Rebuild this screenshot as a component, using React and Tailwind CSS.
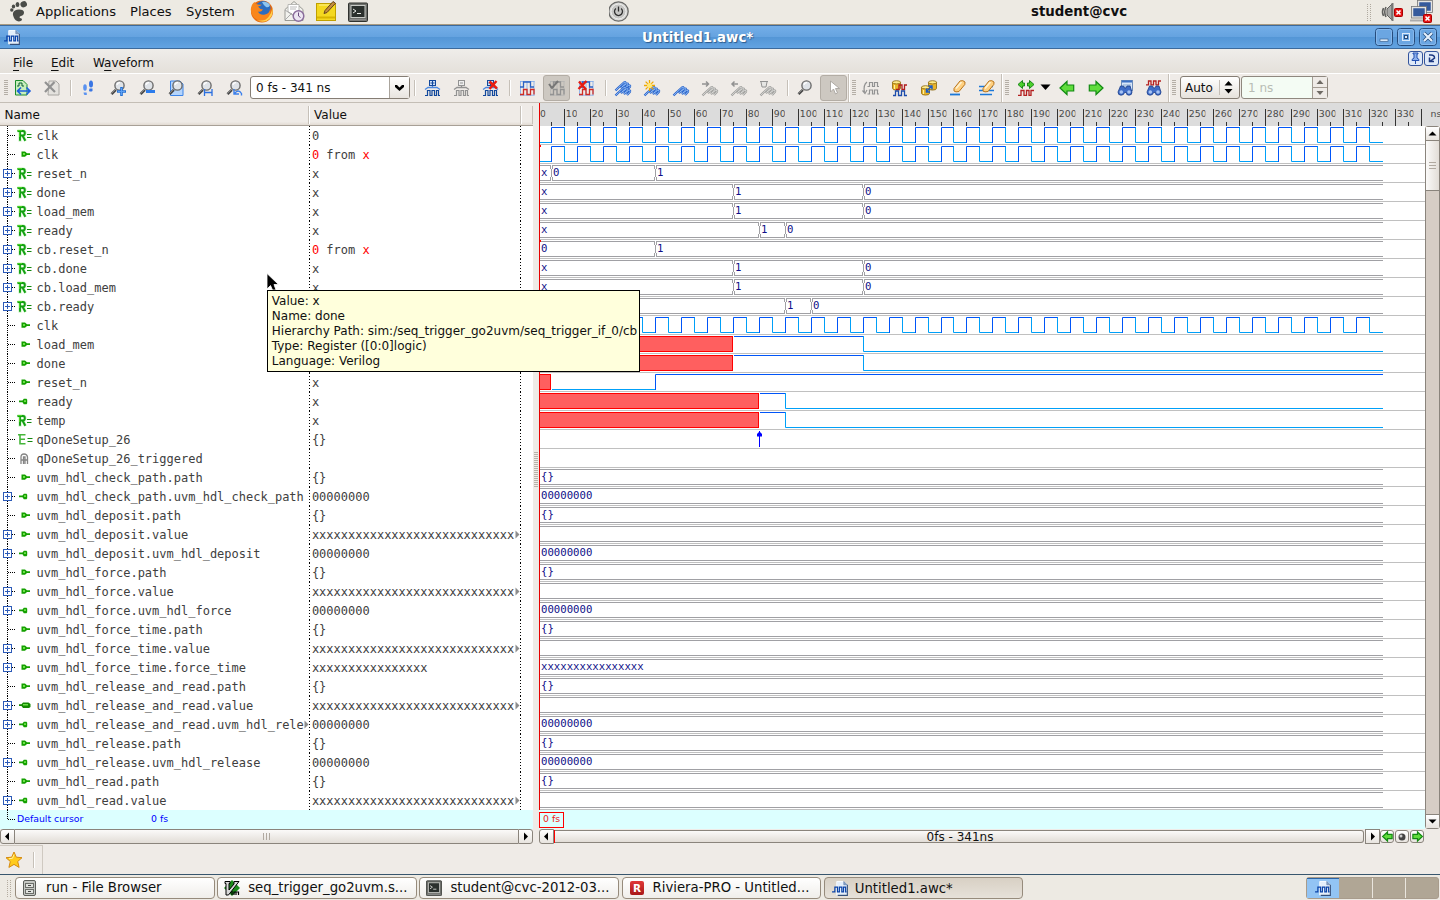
import React from "react";

const X0 = 538.5 - 539;
const SCALE = 2.5968;
const tx = (t) => Math.floor(X0 + t * SCALE);
const END = 844;

const HIGH = "#0055f8";
const LOW = "#00a0f8";
const BUS = "#a0a0a4";

const XS = "x".repeat(28);
const ROWS = [
  { n: "clk", i: "R", v: "0", w: { k: "clk" } },
  { n: "clk", i: "in", v: "0>x", w: { k: "clk" }, mark: true },
  { n: "reset_n", i: "R", e: 1, v: "x", w: { k: "bus", d: [[0, "x"], [5, "0"], [45, "1"]] } },
  { n: "done", i: "R", e: 1, v: "x", w: { k: "bus", d: [[0, "x"], [75, "1"], [125, "0"]] } },
  { n: "load_mem", i: "R", e: 1, v: "x", w: { k: "bus", d: [[0, "x"], [75, "1"], [125, "0"]] } },
  { n: "ready", i: "R", e: 1, v: "x", w: { k: "bus", d: [[0, "x"], [85, "1"], [95, "0"]] } },
  { n: "cb.reset_n", i: "R", e: 1, v: "0>x", w: { k: "bus", d: [[0, "0"], [45, "1"]] }, mark: true },
  { n: "cb.done", i: "R", e: 1, v: "x", w: { k: "bus", d: [[0, "x"], [75, "1"], [125, "0"]] } },
  { n: "cb.load_mem", i: "R", e: 1, v: "x", w: { k: "bus", d: [[0, "x"], [75, "1"], [125, "0"]] } },
  { n: "cb.ready", i: "R", e: 1, v: "x", w: { k: "bus", d: [[0, "x"], [95, "1"], [105, "0"]] } },
  { n: "clk", i: "in", v: "x", w: { k: "clk" } },
  { n: "load_mem", i: "in", v: "x", w: { k: "sig", d: [[0, "x"], [75, 1], [125, 0]] } },
  { n: "done", i: "in", v: "x", w: { k: "sig", d: [[0, "x"], [75, 1], [125, 0]] } },
  { n: "reset_n", i: "in", v: "x", w: { k: "sig", d: [[0, "x"], [5, 0], [45, 1]] } },
  { n: "ready", i: "out", v: "x", w: { k: "sig", d: [[0, "x"], [85, 1], [95, 0]] } },
  { n: "temp", i: "R", v: "x", w: { k: "sig", d: [[0, "x"], [85, 1], [95, 0]] } },
  { n: "qDoneSetup_26", i: "E", v: "{}", w: { k: "ev", t: 85 } },
  { n: "qDoneSetup_26_triggered", i: "A", v: "", w: { k: "none" } },
  { n: "uvm_hdl_check_path.path", i: "in", v: "{}", w: { k: "bus", d: [[0, "{}"]] } },
  { n: "uvm_hdl_check_path.uvm_hdl_check_path", i: "out", e: 1, v: "00000000", w: { k: "bus", d: [[0, "00000000"]] } },
  { n: "uvm_hdl_deposit.path", i: "in", v: "{}", w: { k: "bus", d: [[0, "{}"]] } },
  { n: "uvm_hdl_deposit.value", i: "in", e: 1, v: XS, m: 1, w: { k: "bus", d: [[0, ""]] } },
  { n: "uvm_hdl_deposit.uvm_hdl_deposit", i: "out", e: 1, v: "00000000", w: { k: "bus", d: [[0, "00000000"]] } },
  { n: "uvm_hdl_force.path", i: "in", v: "{}", w: { k: "bus", d: [[0, "{}"]] } },
  { n: "uvm_hdl_force.value", i: "in", e: 1, v: XS, m: 1, w: { k: "bus", d: [[0, ""]] } },
  { n: "uvm_hdl_force.uvm_hdl_force", i: "out", e: 1, v: "00000000", w: { k: "bus", d: [[0, "00000000"]] } },
  { n: "uvm_hdl_force_time.path", i: "in", v: "{}", w: { k: "bus", d: [[0, "{}"]] } },
  { n: "uvm_hdl_force_time.value", i: "in", e: 1, v: XS, m: 1, w: { k: "bus", d: [[0, ""]] } },
  { n: "uvm_hdl_force_time.force_time", i: "in", e: 1, v: "x".repeat(16), w: { k: "bus", d: [[0, "x".repeat(16)]] } },
  { n: "uvm_hdl_release_and_read.path", i: "in", v: "{}", w: { k: "bus", d: [[0, "{}"]] } },
  { n: "uvm_hdl_release_and_read.value", i: "io", e: 1, v: XS, m: 1, w: { k: "bus", d: [[0, ""]] } },
  { n: "uvm_hdl_release_and_read.uvm_hdl_rele", nm: 1, i: "out", e: 1, v: "00000000", w: { k: "bus", d: [[0, "00000000"]] } },
  { n: "uvm_hdl_release.path", i: "in", v: "{}", w: { k: "bus", d: [[0, "{}"]] } },
  { n: "uvm_hdl_release.uvm_hdl_release", i: "out", e: 1, v: "00000000", w: { k: "bus", d: [[0, "00000000"]] } },
  { n: "uvm_hdl_read.path", i: "in", v: "{}", w: { k: "bus", d: [[0, "{}"]] } },
  { n: "uvm_hdl_read.value", i: "out", e: 1, v: XS, m: 1, w: { k: "bus", d: [[0, ""]] } },
];

/* ---------- waveforms ---------- */

function Clock() {
  let hi = "";
  let lo = "M0 16.5H" + (tx(5) + 0.5);
  for (let t = 5; t <= 315; t += 10) {
    const a = tx(t) + 0.5;
    const b = tx(t + 5) + 0.5;
    const c = t + 10 > 320 ? END : tx(t + 10) + 0.5;
    hi += `M${a} 17V1.5H${b}`;
    lo += `M${b} 1V16.5H${c}`;
  }
  return (
    <>
      <path d={lo} stroke={LOW} fill="none" />
      <path d={hi} stroke={HIGH} fill="none" />
    </>
  );
}

function Bus({ d }) {
  return d.map(([t, label], i) => {
    const a = i === 0 ? 0 : tx(t) + 1.5;
    const last = i === d.length - 1;
    const b = last ? END : tx(d[i + 1][0]) - 0.5;
    return (
      <g key={i}>
        <path
          fill="none"
          stroke={BUS}
          d={
            `M${a} 1.5H${b}M${a} 16.5H${b}` +
            (i > 0 ? `M${a} 1V5M${a - 1} 5V13M${a} 13V17` : "") +
            (last ? "" : `M${b} 1V5M${b + 1} 5V13M${b} 13V17`)
          }
        />
        <text x={i === 0 ? 2 : tx(t) + 2} y="12" fontSize="10.67" fill="#101088" className="font-['DejaVu_Sans_Mono',monospace]">
          {label}
        </text>
      </g>
    );
  });
}

function Signal({ d }) {
  return d.map(([t, v], i) => {
    const a = tx(t) + 0.5;
    const b = i === d.length - 1 ? END : tx(d[i + 1][0]) + 0.5;
    if (v === "x") return <rect key={i} x="-2" y="1.5" width={b + 1} height="15" fill="#ff5f5f" stroke="#f00" />;
    const y = v ? 1.5 : 16.5;
    const c = v ? HIGH : LOW;
    return (
      <path key={i} fill="none" stroke={c} d={i === 1 ? `M${a + 0.5} ${y}H${b}` : `M${a} ${v ? 17 : 1}V${y}H${b}`} />
    );
  });
}

function WaveRow({ r }) {
  const w = r.w;
  return (
    <svg width="886" height="19" className="block shrink-0">
      <path d="M0 18.5H886" stroke="#c0c0c0" />
      {w.k === "clk" && <Clock />}
      {w.k === "bus" && <Bus d={w.d} />}
      {w.k === "sig" && <Signal d={w.d} />}
      {w.k === "ev" && (
        <g transform={`translate(${tx(w.t)} 0)`} fill="#0000ff">
          <path d="M0 1h1v16H0z" />
          <path d="M-1 2.500h3v1h1V6.500h-5V3.500h1z" />
        </g>
      )}
      {r.mark && <rect x="0" y="0" width="2" height="2" fill="#f00" />}
      <path d="M0.5 0V19" stroke="#e80000" />
    </svg>
  );
}

function Ruler() {
  const majors = Array.from({ length: 35 }, (_, i) => i * 10);
  return (
    <svg width="901" height="23" className="block shrink-0 bg-[#dcdcdc]">
      {majors.slice(1, 34).map((t) => (
        <path key={t} d={`M${tx(t) + 0.5} 6V23`} stroke="#333" />
      ))}
      <path d="M882.5 6V23" stroke="#333" />
      {majors.slice(0, 33).map((t) => (
        <path key={t} d={`M${tx(t + 5) + 0.5} 19V23`} stroke="#333" />
      ))}
      <path d={`M${tx(335) + 0.5} 19V23`} stroke="#333" />
      {majors.slice(0, 34).map((t) => (
        <svg key={t} x={tx(t) + 1} y="0" width={t === 0 ? 6.6 : t < 100 ? 11.8 : 17.4} height="23">
          <text x={t === 0 ? 1 : 0.8} y="14" fontSize="9.33" fill="#4a4a4a" className="font-['DejaVu_Sans',sans-serif]">
            {t}
          </text>
        </svg>
      ))}
      <text x="891.5" y="14" fontSize="9.33" fill="#4a4a4a" className="font-['DejaVu_Sans',sans-serif]">
        ns
      </text>
      <path d="M0.5 0V23" stroke="#e80000" />
    </svg>
  );
}

/* ---------- signal tree ---------- */

function TypeIcon({ i }) {
  if (i === "R")
    return (
      <svg width="16" height="13" className="block">
        <path d="M0.500 2H6Q8 2 8 4T6 6.500H3.500M3 12.500V2M5.500 6.500L8.500 12" fill="none" stroke="#c4f0bc" strokeWidth="3" />
        <path d="M0.500 2H6Q7.800 2 7.800 4.200T6 6.500H3.500M3 11.800V2M5.500 6.500L8.300 11.800" fill="none" stroke="#12a012" strokeWidth="1.900" />
        <path d="M0.500 1.500H5M2.500 3V8" stroke="#4cd424" />
        <path d="M10 5.500h4.500M10 8.500h4.500" stroke="#12880f" />
      </svg>
    );
  if (i === "E")
    return (
      <svg width="16" height="13" className="block">
        <path d="M1 1.8H8.5M3 2V10.8H8.5M3 6.3H8" fill="none" stroke="#45b63a" strokeWidth="1.6" />
        <path d="M10.5 5.5h5M10.5 8.5h5" stroke="#12880f" strokeWidth="1.2" />
      </svg>
    );
  if (i === "A")
    return (
      <svg width="16" height="13" className="block">
        <path d="M4 12V5Q4 2 7 2T10.500 5V12M6.500 12V5h1.500v7M4 8h6" fill="none" stroke="#858585" strokeWidth="1.300" />
      </svg>
    );
  if (i === "in")
    return (
      <svg width="16" height="13" className="block">
        <path d="M4.5 3.5H8L10 5.3H13V7H10L8 8.8H4.5z" fill="#14a000" />
        <path d="M6 5h2v2H6z" fill="#6ee04a" />
      </svg>
    );
  if (i === "out")
    return (
      <svg width="16" height="13" className="block">
        <path d="M2 5.5H5.500L6.800 3.800H9.500L10.200 4.700V8.200L9.500 9.200H6.800L5.500 7.300H2z" fill="#14a000" />
        <path d="M7 5.200h2v1.700H7z" fill="#6ee04a" />
      </svg>
    );
  return (
    <svg width="16" height="13" className="block">
      <path d="M2 5.2H4.5L6 3.5H11.5L13.5 5V8L12 9H6L4.5 7H2z" fill="#148a00" />
      <path d="M6 5h5v1.5H6z" fill="#6ee04a" />
    </svg>
  );
}

function More() {
  return (
    <svg width="5" height="9" className="block shrink-0">
      <path d="M0.5 0.5V8.500L4.500 4.500z" fill="#8c8c8c" />
    </svg>
  );
}

function NameRow({ r }) {
  return (
    <div className="flex h-[19px] shrink-0 items-center font-['DejaVu_Sans_Mono',monospace] text-[12px] leading-[19px] whitespace-pre text-[#404040]">
      <svg width="17" height="19" className="block shrink-0">
        <path d="M7.5 0V19" stroke="#000" strokeDasharray="1 1" />
        <path d="M8 9.5H15" stroke="#000" strokeDasharray="1 1" />
        {r.e && (
          <>
            <rect x="3.5" y="5.5" width="8" height="8" fill="#fff" stroke="#2c5ab8" />
            <path d="M5 9.5H10M7.5 7V12" stroke="#2c5ab8" />
          </>
        )}
      </svg>
      <div className="w-[19.5px] shrink-0">
        <TypeIcon i={r.i} />
      </div>
      <div className={r.nm ? "mt-[2px] w-[267.500px] shrink-0 overflow-hidden" : "mt-[2px] w-[272.500px] shrink-0"}>{r.n}</div>
      {r.nm && <div className="w-[5px]"><More /></div>}
      <svg width="2" height="19" className="block shrink-0">
        <path d="M0.5 0V19" stroke="#000" strokeDasharray="1 2" />
      </svg>
      <div className="mt-[2px] w-[204px] shrink-0 pl-[0.9px]">
        {r.v === "0>x" ? (
          <>
            <span className="text-[#ff0000]">0</span> from <span className="text-[#ff0000]">x</span>
          </>
        ) : (
          r.v
        )}
      </div>
      <div className="w-[5px] shrink-0">{r.m && <More />}</div>
      <svg width="2" height="19" className="block shrink-0">
        <path d="M0.5 0V19" stroke="#000" strokeDasharray="1 2" />
      </svg>
    </div>
  );
}

/* ---------- icons ---------- */

const Ico = ({ children, s = 16 }) => (
  <svg width={s} height={s} viewBox="0 0 16 16" className="block overflow-visible" fill="none">
    {children}
  </svg>
);

function DocWave({ s = 16 }) {
  return (
    <Ico s={s}>
      <path d="M4 .5H11.500l3.500 3.500v11H4z" fill="#e4eefa" stroke="#fafcff" />
      <path d="M15.300 4v11.300H5" stroke="#34507c" strokeWidth="1.200" />
      <path d="M11.500 .5v3.500H15z" fill="#88a4cc" stroke="#56749e" strokeWidth=".6" />
      <path d="M-1 11.500h3V6.500h2.800v5h2v-5h2.600v5h1.800v-5h2.300v5h1" stroke="#0b43a8" strokeWidth="1.300" />
    </Ico>
  );
}

function Lens() {
  return (
    <>
      <path d="M5.8 9.8L1.5 14.2" stroke="#474747" strokeWidth="2.6" />
      <path d="M5.2 9.8L1.2 13.7" stroke="#999" strokeWidth=".8" />
      <circle cx="9.5" cy="5.5" r="4.6" fill="#dfe3e8" stroke="#6c6c6c" strokeWidth="1.4" />
      <path d="M7 5a2.7 2.7 0 0 1 3-2.4" stroke="#fff" strokeWidth="1.3" />
    </>
  );
}

const Zoom = ({ children }) => (
  <Ico>
    <Lens />
    {children}
  </Ico>
);

function TreeWave({ c = "#12489c", f = "#cfe0f8", minus, children }) {
  return (
    <Ico>
      <rect x="5.5" y=".5" width="6" height="5" fill={f} stroke={c} />
      <path d={minus ? "M7 3h3" : "M6.5 3h4M8.5 1v4"} stroke={c} />
      <path d="M8.500 6v1.500M1 9.500L4 7.500h9l3 2" stroke={minus ? c : "#4c88e0"} strokeWidth="1.300" />
      <path d="M1 15.500h2.500V10.500h2.500v5h2V10.500h2.500v5h2V10.500h2v5h1.500" stroke={c} strokeWidth="1.200" />
      {children}
    </Ico>
  );
}

function WaveGrid({ a = "#2b62c4", l = "#7ca8ec", b = "#d02c24", children }) {
  return (
    <Ico>
      <path d="M1.500 1V15.500M4.500 1V15.500M8 1V15.500M11.500 1V15.500M15 1V15.500M1 1.500H15.500M1 15.200H15.500" stroke={l} strokeWidth=".8" />
      <path d="M1 7h3.500V2h7V7H15" stroke={a} strokeWidth="1.300" />
      <path d="M1 14.500h3.500V9.500h3.500v5h3.500v-5H15v5" stroke={b} strokeWidth="1.300" />
      {children}
    </Ico>
  );
}

const RedX = ({ d = "M7.5 1.5L15 8.5M14.5 1L7.5 9" }) => <path d={d} stroke="#e81c10" strokeWidth="2.4" />;

const STRANDS = "M.5 15.500L3.500 12.500 9 7.500q2-1 1.300 .8L6.500 12.500 11.500 8.800q2-.8 1.200 1L9.500 13.500 13.500 10.500q2.200-.5 1.500 1.200L12 15";

function Feather({ c = "#2c66cc", l = "#9cc4f8", both, children }) {
  return (
    <Ico>
      {both && (
        <g transform="translate(0 -5)">
          <path d={STRANDS} stroke={c} strokeWidth="2.200" strokeLinejoin="round" />
          <path d={STRANDS} stroke={l} strokeWidth=".8" />
        </g>
      )}
      <path d={STRANDS} stroke={c} strokeWidth="2.200" strokeLinejoin="round" />
      <path d={STRANDS} stroke={l} strokeWidth=".8" />
      {children}
    </Ico>
  );
}

const Cyl = ({ x, y }) => (
  <g transform={`translate(${x} ${y})`}>
    <path d="M0 1.8v6q0 1.8 4 1.8t4-1.8v-6z" fill="#e9b52c" stroke="#8a6508" strokeWidth=".8" />
    <ellipse cx="4" cy="1.8" rx="4" ry="1.6" fill="#ffec8c" stroke="#8a6508" strokeWidth=".8" />
    <path d="M2 4.5v4" stroke="#fff0a0" />
  </g>
);

const Eraser = () => (
  <>
    <path d="M4 8.500L10 1q3-1.200 5 1L14.800 4.500 9 11.500q-3.500 1-5-.5z" fill="#ffd080" stroke="#b8741c" />
    <path d="M6 8.500L11.500 2" stroke="#fff2d0" strokeWidth="1.800" />
  </>
);

const Binoc = () => (
  <>
    <path d="M3.5 6h3l1 2h1.5l1-2h3l2 6q0 3.2-3 3.2T9.5 12.5h-2Q7 15.2 4 15.2T1 12z" fill="#3f6cc6" stroke="#1c3f8c" strokeWidth=".8" />
    <circle cx="4.3" cy="12" r="1.8" fill="#a8c4f4" />
    <circle cx="12" cy="12" r="1.8" fill="#a8c4f4" />
  </>
);

const ArrowGreen = ({ flip, s = 16 }) => (
  <Ico s={s}>
    <path
      transform={flip ? "translate(16 0) scale(-1 1)" : ""}
      d="M1 8L8 1.500V5H14.700V11H8V14.500z"
      fill="#5fdc3c"
      stroke="#128a12"
      strokeWidth={s < 16 ? 1.8 : 1.2}
    />
  </Ico>
);

function Terminal({ s }) {
  return (
    <svg width={s} height={s} viewBox="0 0 20 20" fill="none" className="block">
      <rect x=".5" y="1" width="19" height="18.5" rx="1" fill="#6e706c" stroke="#30322f" />
      <rect x="3" y="3.5" width="14" height="12" fill="#2b302d" stroke="#c8cac6" />
      <path d="M5 7l3 2-3 2M9 11.5h4" stroke="#e8eae6" />
      <path d="M2 17.8h16" stroke="#999" />
    </svg>
  );
}

function RedBadge({ x, y }) {
  return (
    <g transform={`translate(${x} ${y})`}>
      <rect x=".5" y=".5" width="8" height="8" rx="1" fill="#e81414" stroke="#a80000" />
      <path d="M2.5 2.5l4 4M6.5 2.5l-4 4" stroke="#fff" strokeWidth="1.6" />
    </g>
  );
}

function Star() {
  return (
    <svg width="18" height="18" viewBox="0 0 18 18" className="block">
      <path d="M9 1l2.3 5.2 5.7.5-4.3 3.8 1.4 5.9L9 13.4l-5.1 3 1.4-5.9L1 6.7l5.7-.5z" fill="#ffcb1c" stroke="#d68a10" strokeLinejoin="round" />
      <path d="M9 3.5L7.5 7.3 4 7.7" stroke="#fff3a0" fill="none" />
    </svg>
  );
}

/* ---------- chrome ---------- */

function TopPanel() {
  return (
    <div className="flex h-[25px] shrink-0 border-b border-[#a89a80] bg-[#edeae3] font-['DejaVu_Sans',sans-serif] text-[13.1px] leading-[24px] text-[#101010]">
      <div className="flex w-[609px] shrink-0">
        <svg width="36" height="24" className="block shrink-0" fill="#4a4c48">
          <path d="M13 13q1-3.500 6-3.500 5 0 5 3 0 2.500-3 3.500-1.500.5-1.500 1.300 0 .8 2 1.200 1.500 1.500-1.500 2.800-4.500 .8-6.300-4-1.200-2.800-.7-4.300z" />
          <circle cx="11.800" cy="10" r="1.700" />
          <ellipse cx="13.500" cy="6.500" rx="1.700" ry="2.100" />
          <ellipse cx="17.500" cy="4.600" rx="1.900" ry="2.500" />
          <ellipse cx="23.700" cy="4.300" rx="3.300" ry="3" transform="rotate(-25 23.700 4.300)" />
        </svg>
        <span className="w-[94px]">Applications</span>
        <span className="w-[56px]">Places</span>
        <span className="w-[64px]">System</span>
        <svg width="24" height="24" className="block shrink-0">
          <circle cx="12" cy="11.500" r="11" fill="#e66a10" />
          <circle cx="13" cy="8.500" r="7.500" fill="#2a6cc0" />
          <path d="M12 2q5-1 8 3-1 3-4 2-2-1-4-5z" fill="#8cc4f0" />
          <path d="M1 8Q2 3 5 2q0 2 3 2.500 2 .5 4 0-2 2-4 2 2 3 5 3-2 3-5 2 2 4 7 3 5-1 5-6 2 8-4 11-7 3-12-2Q0 13 1 8z" fill="#f8861c" />
          <path d="M22.500 8q1.500 9-6 13-5 2-10-1 8 2 12-3 3-4 4-9z" fill="#ffd04a" />
        </svg>
        <svg width="24" height="24" className="ml-[9px] block shrink-0" fill="none">
          <path d="M2 9.500L11 1.500l9 8v11H2z" fill="#f2f2ee" stroke="#9a9a94" />
          <path d="M5 4.500h11v8l-5 3-6-4z" fill="#fff" stroke="#b8b8b4" />
          <path d="M7 7h7M7 9h6" stroke="#bbb" />
          <path d="M2 20l7-7M2 10l9 6" stroke="#aaa" />
          <circle cx="15.500" cy="16" r="5.300" fill="#ece6f2" stroke="#8a6c9c" strokeWidth="1.500" />
          <path d="M15.500 12.500V16l2 1.500" stroke="#6c4c80" />
        </svg>
        <svg width="24" height="24" className="ml-[8px] block shrink-0" fill="none">
          <rect x="1.500" y="3.500" width="19" height="17" fill="#f4d820" stroke="#c0a000" />
          <path d="M2 17.500h18" stroke="#d8b400" strokeWidth="2" />
          <path d="M4 5h12" stroke="#fff48c" />
          <path d="M9 13.500l1-3L18 1.500l2.500 1.800L12 12.500z" fill="#c48c3c" stroke="#64441c" />
        </svg>
        <div className="ml-[9px] pt-[2px]">
          <Terminal s={20} />
        </div>
      </div>
      <svg width="22" height="24" className="block shrink-0" fill="none">
        <circle cx="9.500" cy="11.500" r="9.700" fill="#d6d6d4" stroke="#6a6a68" strokeWidth="1.300" />
        <circle cx="9.500" cy="11.500" r="7.500" fill="#c6c6c4" stroke="#efefed" />
        <path d="M6.900 8.500a4 4 0 1 0 5.200 0M9.500 6.500v5" stroke="#303030" strokeWidth="1.300" />
      </svg>
      <span className="ml-[400px] w-[335px] text-[13.33px] font-bold">student@cvc</span>
      <svg width="74" height="24" className="block shrink-0" fill="none">
        <path d="M1.500 4V21M4.500 4V21" stroke="#b0aaa0" strokeDasharray="1 1" />
        <path d="M17.500 8q-2 4 0 8M20 7q-2.500 5 0 10" stroke="#60605e" strokeWidth="1.600" />
        <path d="M21 9l5-5v16l-5-5z" fill="#a8a8a6" stroke="#60605e" />
        <path d="M26.500 3v18" stroke="#787876" strokeWidth="2" />
        <RedBadge x="28" y="8" />
        <rect x="52.500" y="1.500" width="13" height="10" fill="#355a9c" stroke="#e4e4e2" strokeWidth="1.500" />
        <rect x="51.500" y=".5" width="15" height="12" stroke="#777" strokeWidth=".8" />
        <rect x="46.500" y="7.500" width="13" height="9.500" fill="#355a9c" stroke="#e4e4e2" strokeWidth="1.500" />
        <rect x="45.500" y="6.500" width="15" height="11.500" stroke="#777" strokeWidth=".8" />
        <path d="M44 20.500h15" stroke="#aaa" strokeWidth="2" />
        <RedBadge x="57" y="14" />
      </svg>
    </div>
  );
}

const WinBtn = ({ children }) => (
  <svg width="18" height="19" className="block" fill="none">
    <rect x=".5" y=".5" width="17" height="17" rx="3" fill="#6ba6e2" stroke="#264c7c" />
    <rect x="1.500" y="1.500" width="15" height="15" rx="2" stroke="#86b8ec" />
    {children}
  </svg>
);

function TitleBar() {
  return (
    <div className="flex h-6 shrink-0 items-center border-y border-[#3c6a9c] bg-[linear-gradient(#74aee8,#65a3e0_48%,#5496d6_52%,#62a3e2)]">
      <div className="w-[40px] shrink-0 pl-[5px]">
        <DocWave s={15} />
      </div>
      <div className="ml-[602px] w-[733px] pt-[2px] font-['DejaVu_Sans',sans-serif] text-[13.33px] leading-[22px] font-bold text-white [text-shadow:1px_1px_1px_#2c5a8c]">
        Untitled1.awc*
      </div>
      <div className="flex gap-1">
        <WinBtn>
          <rect x="5" y="11" width="8" height="2.500" fill="#dcebfa" stroke="#2c5484" strokeWidth=".6" />
        </WinBtn>
        <WinBtn>
          <rect x="5.500" y="5.500" width="7" height="7" stroke="#dcebfa" />
          <rect x="7.500" y="7.500" width="3" height="3" stroke="#264c7c" fill="#dcebfa" />
        </WinBtn>
        <WinBtn>
          <path d="M5 5l8 8M13 5l-8 8" stroke="#264c7c" strokeWidth="3.600" />
          <path d="M5 5l8 8M13 5l-8 8" stroke="#e4f0fc" strokeWidth="2.200" />
        </WinBtn>
      </div>
    </div>
  );
}

function MenuBar() {
  const u = "underline decoration-1 underline-offset-[3px]";
  return (
    <div className="flex h-[25px] shrink-0 border-b border-white bg-[linear-gradient(#efedea,#e4e0da)] pl-[13px] font-['DejaVu_Sans',sans-serif] text-[12px] leading-[28px] text-[#101010]">
      <span className="w-[38px]"><span className={u}>F</span>ile</span>
      <span className="w-[42px]"><span className={u}>E</span>dit</span>
      <span className="w-[1315px]">W<span className={u}>a</span>veform</span>
      <svg width="32" height="18" className="mt-[1px] block shrink-0" fill="none">
        <rect x=".5" y="1.500" width="14" height="14" rx="2.500" fill="#dfe9f8" stroke="#34549c" />
        <path d="M5 3h5v1H9v4l2 1.500v1H4v-1L6 8V4H5zM7.500 10.500V14" fill="#8cb0ec" stroke="#2450b0" />
        <rect x="16.500" y="1.500" width="14" height="14" rx="2.500" fill="#dfe9f8" stroke="#34549c" />
        <path d="M21 5h2q3.500 0 3.500 3l-4 3M26 11.500h-4.500v-4" stroke="#1c3880" strokeWidth="1.500" />
      </svg>
    </div>
  );
}

const Cell = ({ children, pressed }) => (
  <div className="flex h-7 w-[29px] shrink-0 items-center justify-center">
    <div className={pressed ? "flex h-[26px] w-[27px] items-center justify-center rounded-[3px] border border-[#b3ada5] bg-[#cdc8c1]" : "flex w-[27px] justify-center pl-px"}>
      {children}
    </div>
  </div>
);

const Sep = () => (
  <div className="flex h-7 w-2 shrink-0 items-center justify-end pr-[2px]">
    <div className="h-4 w-[2px] border-l border-[#c6c0b8] bg-white" />
  </div>
);

const Handle = () => (
  <div className="flex h-7 w-2 shrink-0 items-center justify-center">
    <svg width="4" height="16" className="block">
      <path d="M2 0V16" stroke="#b4aea6" strokeWidth="4" strokeDasharray="1 1" />
    </svg>
  </div>
);

const Divider = () => <div className="h-[28px] w-[2px] shrink-0 border-l border-[#c6c0b8] bg-white" />;

function ToolBar() {
  const g = "#929292";
  return (
    <div className="flex h-[29px] shrink-0 items-center border-b border-[#c4beb6] bg-[#efebe7] font-['DejaVu_Sans',sans-serif] text-[12px] text-[#101010]">
      <div className="flex w-[250px] shrink-0 pl-[2px]">
        <div className="w-[6px]"><Handle /></div>
        <Cell>
          <Ico>
            <path d="M.5 .5H8l4 4v10.500H.5z" fill="#c8eebc" stroke="#1c8c2c" />
            <path d="M2 6h2V3h3v3h2" stroke="#0c5c34" />
            <path d="M2 11h13M6 7.500L2.500 11 6 14.500M11.500 7.500L15 11l-3.500 3.500" stroke="#1c60dc" strokeWidth="1.600" />
          </Ico>
        </Cell>
        <Cell>
          <Ico>
            <path d="M5 1h7l3 3v11H4z" fill="#e4e2de" stroke="#a8a6a2" />
            <path d="M1 2l10 10M10.500 2L1 12" stroke={g} strokeWidth="2.200" />
          </Ico>
        </Cell>
        <Sep />
        <Cell>
          <Ico>
            <ellipse cx="4" cy="7.500" rx="1.800" ry="3.200" fill="#5a92f0" />
            <path d="M2.500 12.500h3l.5 2q-1.500 1-3 0z" fill="#5a92f0" />
            <ellipse cx="10" cy="4" rx="2" ry="3.500" fill="#3a76e4" />
            <path d="M8.500 8.500h3v2.500q-2 1-3.500 0z" fill="#3a76e4" />
          </Ico>
        </Cell>
        <Cell><Zoom><path d="M7 11.500h9M11.500 7v9" stroke="#2470d4" strokeWidth="2.600" /><path d="M8 11.500h7M11.500 8v7" stroke="#5ca0f4" /></Zoom></Cell>
        <Cell><Zoom><path d="M7 11.500h9" stroke="#2c7cec" strokeWidth="3" /></Zoom></Cell>
        <Cell>
          <Ico>
            <path d="M2.500 1H12l3 3v11.500H2.500z" fill="#b4d4fc" stroke="#3c84e8" />
            <Lens />
          </Ico>
        </Cell>
        <Cell><Zoom><path d="M7.500 9v7M15 9v7M8 12.500h7" stroke="#2c70e0" strokeWidth="1.300" /></Zoom></Cell>
        <Cell><Zoom><path d="M8 9v5h5M8.500 13.500q4-5 7 0v2" stroke="#3c80ec" strokeWidth="1.400" /></Zoom></Cell>
      </div>
      <div className="mb-px flex h-[23px] w-[160px] shrink-0 rounded-[3px] border border-[#857d74] bg-white leading-[22px]">
        <span className="w-[139px] border-r border-[#aaa49c] pl-[5px]">0 fs - 341 ns</span>
        <span className="flex flex-1 items-center justify-center bg-[linear-gradient(#fff,#e8e4df)]">
          <svg width="9" height="6" className="block"><path d="M0 0h2l2.500 2.500L7 0h2v2L4.500 6 0 2z" fill="#000" /></svg>
        </span>
      </div>
      <Sep />
      <div className="-ml-px"><Cell><TreeWave /></Cell></div>
      <Cell><TreeWave c={g} f="#eee" minus /></Cell>
      <Cell><TreeWave><RedX /></TreeWave></Cell>
      <div className="ml-px"><Sep /></div>
      <div className="-ml-px"><Cell><WaveGrid /></Cell></div>
      <div className="ml-px"><Cell pressed><WaveGrid a={g} b={g} l="#b4b4b2"><path d="M0 4l3 4 6-7" stroke="#777" strokeWidth="2" /></WaveGrid></Cell></div>
      <Cell><WaveGrid><RedX d="M1 1.500L8 9.500M8.500 1L0.500 9" /></WaveGrid></Cell>
      <div className="ml-px"><Sep /></div>
      <div className="-ml-px"><Cell><Feather both /></Cell></div>
      <Cell>
        <Feather>
          <path d="M5.500 0V11M0 5.500H11M1.600 1.600l7.800 7.800M9.400 1.600L1.600 9.400" stroke="#f0a800" strokeWidth="1.300" />
          <circle cx="5.500" cy="5.500" r="2.500" fill="#ffe878" />
        </Feather>
      </Cell>
      <Cell><Feather /></Cell>
      <Cell><Feather c="#a0a09e" l="#dededc"><path d="M0 4h6M4 1.500L6.500 4 4 6.500" stroke={g} strokeWidth="1.500" /></Feather></Cell>
      <Cell><Feather c="#a0a09e" l="#dededc"><path d="M1 4h6M3.500 1.500L1 4l2.500 2.500" stroke={g} strokeWidth="1.500" /></Feather></Cell>
      <Cell><Feather c="#a0a09e" l="#dededc"><path d="M0 1.500h8M1 2l1 5h4l1-5" fill="#e6e6e4" stroke={g} /></Feather></Cell>
      <div className="ml-px"><Sep /></div>
      <div className="-ml-px"><Cell><Zoom /></Cell></div>
      <Cell pressed>
        <Ico><path d="M4.500 1v11l3-3 2 5 2-1-2-4.500h4z" fill="#fff" stroke="#a8a49e" strokeWidth=".9" /></Ico>
      </Cell>
      <Divider />
      <Handle />
      <div className="-ml-[2px]">
        <Cell>
          <Ico>
            <path d="M4 2Q0 5 1.500 12M-.5 10.500L2 13.500 4 10" stroke={g} strokeWidth="1.200" />
            <path d="M4.500 6.500h2V2.500h3v4h2v-4h3v4H16M4.500 14h2V10h3v4h2v-4h3v4H16" stroke={g} strokeWidth="1.200" />
          </Ico>
        </Cell>
      </div>
      <Cell>
        <Ico>
          <Cyl x="0.500" y="0.500" />
          <path d="M4 9.500h3V5h3v4.500h2.500V5H15" stroke="#b01c1c" strokeWidth="1.300" />
          <path d="M1 15.500h2.500v-4.500h3v4.500h3v-4.500h3v4.500H15" stroke="#1c4cac" strokeWidth="1.300" />
        </Ico>
      </Cell>
      <Cell>
        <Ico>
          <Cyl x="7.500" y="0.500" />
          <Cyl x="0.500" y="5.500" />
          <path d="M5 12l6-6M5.500 8.500V12H9M7.500 6H11v3.500" stroke="#1c5cc4" strokeWidth="1.400" />
        </Ico>
      </Cell>
      <Cell><Ico><Eraser /><path d="M0 14.500h10" stroke="#1c78d8" strokeWidth="1.800" /></Ico></Cell>
      <Cell><Ico><path d="M0 6.500h14M0 10.500h15M1 14.500h12" stroke="#1c78d8" strokeWidth="1.600" /><Eraser /></Ico></Cell>
      <Divider />
      <Handle />
      <Cell>
        <Ico>
          <path d="M0 4.500L4.500 .5v2.500h2V6h-2v2.500zM16 4.500L11.500 .5v2.500h-2V6h2v2.500z" fill="#4cd02c" stroke="#107c10" strokeWidth=".9" />
          <path d="M0 15.300h3v-4.800h3v4.800h2.500v-4.800H11v4.800h2v-4.800h3" stroke="#b42020" strokeWidth="1.300" />
        </Ico>
      </Cell>
      <svg width="11" height="28" className="block shrink-0"><path d="M0.500 10.500h10L5.500 16z" fill="#000" /></svg>
      <div className="ml-px"><Cell><ArrowGreen /></Cell></div>
      <Cell><ArrowGreen flip /></Cell>
      <Cell>
        <Ico>
          <rect x="4.500" y=".5" width="11" height="10" fill="#d8e6f8" stroke="#6c8cb8" />
          <path d="M5 1.500h10" stroke="#3c70c4" strokeWidth="2" />
          <path d="M6 5h8M6 7h8" stroke="#88a8d0" />
          <Binoc />
        </Ico>
      </Cell>
      <Cell>
        <Ico>
          <path d="M0 4.800h2.500V1H5v3.800h2.500V1H10v3.800h2.500V1H15" stroke="#b42020" strokeWidth="1.300" />
          <Binoc />
        </Ico>
      </Cell>
      <Divider />
      <Handle />
      <div className="mb-px ml-[2px] flex h-[23px] w-[60px] shrink-0 items-center rounded-[3px] border border-[#857d74] bg-[linear-gradient(#fff,#e6e2dc)] pl-[4px]">
        <span className="w-[34px]">Auto</span>
        <svg width="20" height="17" className="block"><path d="M0.500 1V16" stroke="#c4beb6" /><path d="M5.500 6.500L9.500 2l4 4.500zM5.500 10L9.500 14.500l4-4.500z" fill="#000" /></svg>
      </div>
      <div className="mb-px ml-[1px] flex h-[23px] w-[87px] shrink-0 rounded-[3px] border border-[#8f887f] bg-[#f4fcf4] leading-[22px] text-[#b8bcb4]">
        <span className="w-[71px] border-r border-[#a39c93] pl-[6px]">1 ns</span>
        <svg width="14" height="21" className="block shrink-0 bg-[#efebe7]"><path d="M3.500 7L7 3l3.500 4zM3.500 14L7 18l3.500-4z" fill="#6e6a64" /><path d="M0 10.500H14" stroke="#a39c93" /></svg>
      </div>
    </div>
  );
}

const btn = "border border-[#8a847c] bg-[linear-gradient(#fff,#e8e4df)] flex items-center justify-center shrink-0";

const Tri = ({ d }) => (
  <svg width="9" height="9" className="block shrink-0"><path d={d} fill="#000" /></svg>
);
const TL = "M2 4.500L6 .5v8z";
const TR = "M7 4.500L3 .5v8z";

function LeftPane() {
  return (
    <div className="flex w-[533px] shrink-0 flex-col bg-white">
      <div className="flex h-[23px] shrink-0 items-center border-b border-[#a8a097] bg-[linear-gradient(#efebe7_85%,#e2dbd3)] pt-px font-['DejaVu_Sans',sans-serif] text-[12px] text-[#101010]">
        <span className="w-[308px] pl-[4.5px]">Name</span>
        <div className="h-[18px] w-[2px] border-l border-[#c6c0b8] bg-white" />
        <span className="w-[210px] pl-1">Value</span>
        <div className="h-[18px] w-[2px] border-l border-[#c6c0b8] bg-white" />
        <div className="ml-[10px] h-[18px] w-px bg-[#c6c0b8]" />
      </div>
      {ROWS.map((r, i) => (
        <NameRow key={i} r={r} />
      ))}
      <div className="flex h-[19px] shrink-0 bg-[#dcffff] font-['DejaVu_Sans',sans-serif] text-[9.33px] leading-[18px] text-[#0000ff]">
        <svg width="17" height="19" className="block shrink-0"><path d="M7.500 0V9.500H15" fill="none" stroke="#000" strokeDasharray="1 1" /></svg>
        <span className="w-[134px]">Default cursor</span>
        <span>0 fs</span>
      </div>
      <div className="flex h-[16px] shrink-0 bg-[#efebe7]">
        <div className={btn + " h-[15px] w-[15px] rounded-l-[3px]"}><Tri d={TL} /></div>
        <div className="flex h-[15px] flex-1 items-center justify-center border-y border-[#8a847c] bg-[linear-gradient(#fbfaf9,#e2ddd7)]">
          <svg width="8" height="7" className="block"><path d="M.5 0V7M3.500 0V7M6.500 0V7" stroke="#b0a9a0" /></svg>
        </div>
        <div className={btn + " h-[15px] w-[15px] rounded-r-[3px]"}><Tri d={TR} /></div>
      </div>
    </div>
  );
}

function RightPane() {
  return (
    <div className="flex w-[901px] shrink-0 flex-col">
      <Ruler />
      <div className="flex h-[703px] shrink-0">
        <div className="flex w-[886px] shrink-0 flex-col bg-white">
          {ROWS.map((r, i) => (
            <WaveRow key={i} r={r} />
          ))}
          <div className="h-[19px] shrink-0 bg-[#dcffff] pt-[2px] font-['DejaVu_Sans',sans-serif] text-[9.33px]">
            <div className="h-4 w-[25px] border border-[#f00] pl-[3px] leading-[12px] text-[#f02020]">0 fs</div>
          </div>
        </div>
        <div className="flex w-[15px] flex-col rounded-[3px] border border-[#8a847c] bg-[#d6cdc5]">
          <div className="flex h-[14px] items-center justify-center border-b border-[#8a847c] bg-[linear-gradient(#fff,#e8e4df)]"><Tri d="M4.500 2.500L8.500 6.500H.5z" /></div>
          <div className="flex h-[50px] items-center justify-center border-b border-[#8a847c] bg-[linear-gradient(90deg,#fbfaf9,#e2ddd7)]">
            <svg width="7" height="8" className="block"><path d="M0 .5H7M0 3.500H7M0 6.500H7" stroke="#b0a9a0" /></svg>
          </div>
          <div className="flex-1" />
          <div className="flex h-[14px] items-center justify-center border-t border-[#8a847c] bg-[linear-gradient(#fff,#e8e4df)]"><Tri d="M4.500 6.500L8.500 2.500H.5z" /></div>
        </div>
      </div>
      <div className="flex h-[16px] shrink-0">
        <div className={btn + " h-[15px] w-[15px] rounded-l-[3px]"}><Tri d={TL} /></div>
        <div className="mt-px h-[13px] w-px bg-[#f00]" />
        <div className="mt-px h-[13px] w-[809px] rounded-r-[3px] border border-l-0 border-[#8a847c] bg-[linear-gradient(#fbfaf9,#e2ddd7)] text-center font-['DejaVu_Sans',sans-serif] text-[12px] leading-[12px] text-[#101010]">
          <span className="pl-[2px]">0fs - 341ns</span>
        </div>
        <div className={btn + " ml-px h-[15px] w-[15px]"}><Tri d={TR} /></div>
        <div className={btn + " mt-px h-[13px] w-[14px] rounded-[3px]"}><ArrowGreen s={11} /></div>
        <div className={btn + " mt-px ml-px h-[13px] w-[14px] rounded-[3px]"}>
          <svg width="8" height="8" className="block"><circle cx="4" cy="4" r="3.500" fill="#444" /><circle cx="3" cy="3" r="1.500" fill="#ccc" /></svg>
        </div>
        <div className={btn + " mt-px ml-px h-[13px] w-[14px] rounded-[3px]"}><ArrowGreen flip s={11} /></div>
      </div>
    </div>
  );
}

function Task({ icon, label, active }) {
  return (
    <div className={"flex h-[22px] w-[199.500px] shrink-0 items-center rounded-[4px] border border-[#968b7c] pl-[6px] " + (active ? "bg-[linear-gradient(#d8d0c4,#e6e1d9)] pt-px" : "bg-[linear-gradient(#fff,#f0eeea)]")}>
      <div className="w-[24px] shrink-0">{icon}</div>
      <span className="whitespace-pre">{label}</span>
    </div>
  );
}

function TaskBar() {
  return (
    <div className="flex h-[26px] shrink-0 border-t border-[#38566e] bg-[#edeae3] pt-[2px] font-['DejaVu_Sans',sans-serif] text-[13.25px] leading-5 text-[#101010]">
      <svg width="15" height="22" className="block shrink-0"><path d="M7.500 3V20M10.500 3V20" stroke="#b4aca0" strokeDasharray="1 1" /></svg>
      <div className="flex w-[1291px] gap-[2.700px]">
        <Task
          label="run - File Browser"
          icon={
            <svg width="16" height="16" className="block" fill="none">
              <rect x="1.500" y=".5" width="12" height="15" rx="1.500" fill="#c6c8c4" stroke="#5c5e5a" />
              <rect x="3.500" y="3.500" width="8" height="4" stroke="#6c6e6a" fill="#e0e2de" />
              <rect x="3.500" y="9.500" width="8" height="4" stroke="#6c6e6a" fill="#e0e2de" />
              <path d="M6 5.500h3M6 11.500h3" stroke="#444" />
            </svg>
          }
        />
        <Task
          label="seq_trigger_go2uvm.s..."
          icon={
            <svg width="17" height="17" className="block" fill="none">
              <path d="M8 0l8 8-8 8-8-8z" fill="#1c8c1c" />
              <path d="M1 1.500h5v2H5V10l5-6V1.500h5L4.500 15H2V3.500H1z" fill="#d8d8d8" stroke="#000" />
              <path d="M8 15v-4M10 15v-3h2v3M12.500 12h2v3" stroke="#000" strokeWidth="1.200" />
            </svg>
          }
        />
        <Task label="student@cvc-2012-03..." icon={<Terminal s={16} />} />
        <Task
          label="Riviera-PRO - Untitled..."
          icon={
            <div className="ml-[1.500px] h-[14px] w-[14px] rounded-[2px] bg-[linear-gradient(#e03838,#a81818)] text-center text-[10.500px] leading-[14px] font-bold text-white">R</div>
          }
        />
        <Task active label="Untitled1.awc*" icon={<div className="pl-[2px]"><DocWave s={15} /></div>} />
      </div>
      <div className="flex h-[22px] w-[133px] rounded-[3px] border border-[#a89c8c] bg-[#b0a695]">
        <div className="flex w-[32px] items-center justify-center border-t border-[#2c64a4] bg-[#92c4f4]"><DocWave s={15} /></div>
        <div className="w-[34px] border-r border-[#eae6de]" />
        <div className="w-[33px] border-r border-[#eae6de]" />
      </div>
    </div>
  );
}

export default function App() {
  return (
    <div className="relative flex h-[900px] w-[1440px] flex-col overflow-hidden bg-[#efebe7]">
      <TopPanel />
      <TitleBar />
      <MenuBar />
      <ToolBar />
      <div className="flex h-[742px] shrink-0">
        <LeftPane />
        <div className="flex w-[6px] shrink-0 items-center justify-center bg-[#efebe7]">
          <svg width="4" height="36" className="-mt-[8px] block"><path d="M2 0V36" stroke="#b8b2aa" strokeWidth="4" strokeDasharray="1 1" /></svg>
        </div>
        <RightPane />
      </div>
      <div className="flex flex-1 bg-[#efebe7]">
        <div className="flex w-[43px] items-center border-t border-r border-[#cfc9c1] pl-[5px]">
          <Star />
          <div className="ml-[10px] h-4 w-[2px] border-l border-[#c6c0b8] bg-white" />
        </div>
      </div>
      <TaskBar />

      <div className="absolute top-[290px] left-[267px] h-[82px] w-[373px] overflow-hidden border border-black bg-[#ffffdc] pt-[3px] pl-[3.800px] font-['DejaVu_Sans',sans-serif] text-[12px] leading-[15px] whitespace-pre text-[#101010]">
        <div>Value: x</div>
        <div>Name: done</div>
        <div>Hierarchy Path: sim:/seq_trigger_go2uvm/seq_trigger_if_0/cb</div>
        <div>Type: Register ([0:0]logic)</div>
        <div>Language: Verilog</div>
      </div>
      <svg width="14" height="17" className="absolute top-[273px] left-[266px] block">
        <path d="M1 0.500V16L4.500 12.500 6.500 17H10L8 11.500H12.500z" fill="#000" stroke="#fff" strokeWidth=".8" />
      </svg>
    </div>
  );
}
